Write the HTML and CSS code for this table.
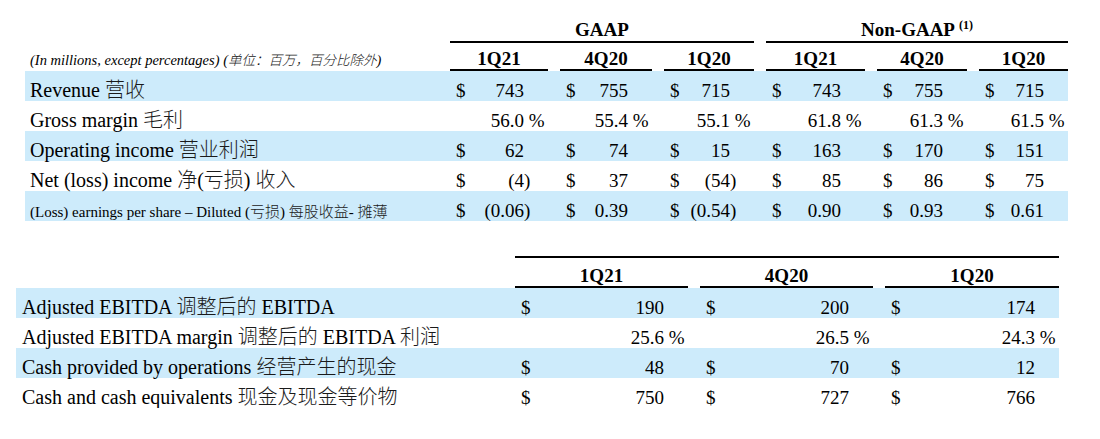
FILE: index.html
```html
<!DOCTYPE html>
<html lang="en">
<head>
<meta charset="utf-8">
<title>Financial summary</title>
<link rel="stylesheet" href="styles.css">
</head>
<body>
<section class="fin fin-top">
  <div class="grid group-row">
    <div></div>
    <div class="group"><span>GAAP</span></div>
    <div class="group"><span>Non-GAAP<sup>(1)</sup></span></div>
  </div>
  <div class="grid head-row">
    <div class="note"><span>(In millions, except percentages) (<span class="zh">单位：百万，百分比除外</span>)</span></div>
    <div class="qh">1Q21</div>
    <div class="qh">4Q20</div>
    <div class="qh">1Q20</div>
    <div class="qh">1Q21</div>
    <div class="qh">4Q20</div>
    <div class="qh">1Q20</div>
  </div>
  <div class="grid row alt">
    <div class="label">Revenue <span class="zh">营收</span></div>
    <div class="val"><span class="cur">$</span><span class="num">743</span><span class="sfx"></span></div>
    <div class="val"><span class="cur">$</span><span class="num">755</span><span class="sfx"></span></div>
    <div class="val"><span class="cur">$</span><span class="num">715</span><span class="sfx"></span></div>
    <div class="val"><span class="cur">$</span><span class="num">743</span><span class="sfx"></span></div>
    <div class="val"><span class="cur">$</span><span class="num">755</span><span class="sfx"></span></div>
    <div class="val"><span class="cur">$</span><span class="num">715</span><span class="sfx"></span></div>
  </div>
  <div class="grid row">
    <div class="label">Gross margin <span class="zh">毛利</span></div>
    <div class="val"><span class="num">56.0</span><span class="sfx">&nbsp;%</span></div>
    <div class="val"><span class="num">55.4</span><span class="sfx">&nbsp;%</span></div>
    <div class="val"><span class="num">55.1</span><span class="sfx">&nbsp;%</span></div>
    <div class="val"><span class="num">61.8</span><span class="sfx">&nbsp;%</span></div>
    <div class="val"><span class="num">61.3</span><span class="sfx">&nbsp;%</span></div>
    <div class="val"><span class="num">61.5</span><span class="sfx">&nbsp;%</span></div>
  </div>
  <div class="grid row alt">
    <div class="label">Operating income <span class="zh">营业利润</span></div>
    <div class="val"><span class="cur">$</span><span class="num">62</span><span class="sfx"></span></div>
    <div class="val"><span class="cur">$</span><span class="num">74</span><span class="sfx"></span></div>
    <div class="val"><span class="cur">$</span><span class="num">15</span><span class="sfx"></span></div>
    <div class="val"><span class="cur">$</span><span class="num">163</span><span class="sfx"></span></div>
    <div class="val"><span class="cur">$</span><span class="num">170</span><span class="sfx"></span></div>
    <div class="val"><span class="cur">$</span><span class="num">151</span><span class="sfx"></span></div>
  </div>
  <div class="grid row">
    <div class="label">Net (loss) income <span class="zh">净</span>(<span class="zh">亏损</span>) <span class="zh">收入</span></div>
    <div class="val"><span class="cur">$</span><span class="num">(4</span><span class="sfx">)</span></div>
    <div class="val"><span class="cur">$</span><span class="num">37</span><span class="sfx"></span></div>
    <div class="val"><span class="cur">$</span><span class="num">(54</span><span class="sfx">)</span></div>
    <div class="val"><span class="cur">$</span><span class="num">85</span><span class="sfx"></span></div>
    <div class="val"><span class="cur">$</span><span class="num">86</span><span class="sfx"></span></div>
    <div class="val"><span class="cur">$</span><span class="num">75</span><span class="sfx"></span></div>
  </div>
  <div class="grid row alt">
    <div class="label small">(Loss) earnings per share – Diluted (<span class="zh">亏损</span>) <span class="zh">每股收益</span>- <span class="zh">摊薄</span></div>
    <div class="val"><span class="cur">$</span><span class="num">(0.06</span><span class="sfx">)</span></div>
    <div class="val"><span class="cur">$</span><span class="num">0.39</span><span class="sfx"></span></div>
    <div class="val"><span class="cur">$</span><span class="num">(0.54</span><span class="sfx">)</span></div>
    <div class="val"><span class="cur">$</span><span class="num">0.90</span><span class="sfx"></span></div>
    <div class="val"><span class="cur">$</span><span class="num">0.93</span><span class="sfx"></span></div>
    <div class="val"><span class="cur">$</span><span class="num">0.61</span><span class="sfx"></span></div>
  </div>
</section>

<section class="fin fin-bot">
  <div class="grid bhead">
    <div></div>
    <div class="bcols">
      <div class="qh">1Q21</div>
      <div class="qh">4Q20</div>
      <div class="qh">1Q20</div>
    </div>
  </div>
  <div class="grid row alt">
    <div class="label">Adjusted EBITDA <span class="zh">调整后的</span> EBITDA</div>
    <div class="val"><span class="cur">$</span><span class="num">190</span><span class="sfx"></span></div>
    <div class="val"><span class="cur">$</span><span class="num">200</span><span class="sfx"></span></div>
    <div class="val"><span class="cur">$</span><span class="num">174</span><span class="sfx"></span></div>
  </div>
  <div class="grid row">
    <div class="label">Adjusted EBITDA margin <span class="zh">调整后的</span> EBITDA <span class="zh">利润</span></div>
    <div class="val"><span class="num">25.6</span><span class="sfx">&nbsp;%</span></div>
    <div class="val"><span class="num">26.5</span><span class="sfx">&nbsp;%</span></div>
    <div class="val"><span class="num">24.3</span><span class="sfx">&nbsp;%</span></div>
  </div>
  <div class="grid row alt">
    <div class="label">Cash provided by operations <span class="zh">经营产生的现金</span></div>
    <div class="val"><span class="cur">$</span><span class="num">48</span><span class="sfx"></span></div>
    <div class="val"><span class="cur">$</span><span class="num">70</span><span class="sfx"></span></div>
    <div class="val"><span class="cur">$</span><span class="num">12</span><span class="sfx"></span></div>
  </div>
  <div class="grid row">
    <div class="label">Cash and cash equivalents <span class="zh">现金及现金等价物</span></div>
    <div class="val"><span class="cur">$</span><span class="num">750</span><span class="sfx"></span></div>
    <div class="val"><span class="cur">$</span><span class="num">727</span><span class="sfx"></span></div>
    <div class="val"><span class="cur">$</span><span class="num">766</span><span class="sfx"></span></div>
  </div>
</section>
</body>
</html>
```

FILE: styles.css
```css
* {
  box-sizing: border-box;
}

body {
  margin: 0;
  background: #ffffff;
  color: #000000;
  font-family: "Liberation Serif", "Noto Sans CJK SC", serif;
}

.zh {
  font-family: "Noto Sans CJK SC", sans-serif;
  font-weight: 300;
  color: #1a1a1a;
}

.fin {
  width: 1043px;
}

.fin-top {
  margin-left: 25px;
}

.fin-top .grid {
  display: grid;
  grid-template-columns: 413px 98px 92px 90px 99px 90px 89px;
  column-gap: 12px;
}

.fin-bot {
  margin: 35px 0 0 16px;
}

.fin-bot .grid {
  display: grid;
  grid-template-columns: 487px 173px 173px 174px;
  column-gap: 12px;
}

.group-row {
  height: 43px;
}

.group {
  grid-column: span 3;
  border-bottom: 2px solid #000;
  display: flex;
  align-items: flex-end;
  justify-content: center;
  font-weight: bold;
  font-size: 19px;
  line-height: 22px;
}

.group sup {
  font-size: 12px;
  line-height: 0;
  margin-left: 4px;
  vertical-align: 7px;
}

.head-row {
  height: 28px;
}

.qh {
  border-bottom: 2px solid #000;
  display: flex;
  align-items: flex-end;
  justify-content: center;
  font-weight: bold;
  font-size: 19px;
  line-height: 21px;
}

.note {
  display: flex;
  align-items: flex-end;
  padding-left: 5px;
  font-style: italic;
  font-size: 14.5px;
  line-height: 21px;
  white-space: nowrap;
}

.note .zh {
  font-size: 13.5px;
}

.bhead {
  height: 32px;
}

.bcols {
  grid-column: 2 / -1;
  border-top: 2px solid #000;
  display: grid;
  grid-template-columns: 173px 173px 174px;
  column-gap: 12px;
}

.row {
  height: 30px;
  align-items: end;
}

.row.alt {
  background: #cdebfb;
}

.label {
  padding-left: 5px;
  font-size: 20px;
  line-height: 22px;
  white-space: nowrap;
}

.fin-bot .label {
  padding-left: 6px;
}

.label.small {
  font-size: 15px;
  line-height: 18px;
}

.val {
  display: flex;
  align-items: baseline;
  padding-left: 6px;
  font-size: 19px;
  line-height: 21px;
  white-space: nowrap;
}

.num {
  margin-left: auto;
  text-align: right;
}

.sfx {
  flex: none;
  width: 24px;
}
```
